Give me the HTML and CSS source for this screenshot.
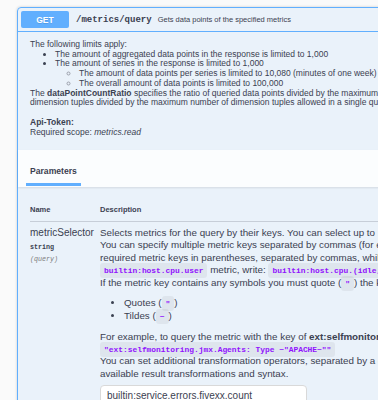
FILE: index.html
```html
<!DOCTYPE html>
<html lang="en">

<head>
    <meta charset="UTF-8">
    <meta name="viewport" content="width=device-width, initial-scale=1.0">
    <title>Metrics API</title>
    <link rel="stylesheet" href="styles.css">
</head>

<body>
    <div class="page">
        <div class="opblock">
            <div class="summary">
                <span class="method">GET</span>
                <span class="path">/metrics/query</span>
                <span class="summary-text">Gets data points of the specified metrics</span>
            </div>

            <div class="op-desc">
                <p>The following limits apply:</p>
                <ul class="limits">
                    <li>The amount of aggregated data points in the response is limited to 1,000</li>
                    <li>The amount of series in the response is limited to 1,000
                        <ul>
                            <li>The amount of data points per series is limited to 10,080 (minutes of one week)</li>
                            <li>The overall amount of data points is limited to 100,000</li>
                        </ul>
                    </li>
                </ul>
                <p>The <b>dataPointCountRatio</b> specifies the ratio of queried data points divided by the maximum number of data points allowed in a single query. The <b>dimensionCountRatio</b> specifies the ratio of queried<br>dimension tuples divided by the maximum number of dimension tuples allowed in a single query.</p>
                <p class="token"><b>Api-Token:</b><br>Required scope: <i>metrics.read</i></p>
            </div>

            <div class="tabs">
                <span class="tab">Parameters</span>
            </div>

            <div class="params">
                <div class="param-head">
                    <span>Name</span>
                    <span>Description</span>
                </div>
                <div class="param-row">
                    <div class="param-name">
                        <div>metricSelector</div>
                        <div class="param-type">string</div>
                        <div class="param-in">(query)</div>
                    </div>
                    <div class="param-desc">
                        <p>Selects metrics for the query by their keys. You can select up to 10 metrics for one query.<br>You can specify multiple metric keys separated by commas (for example, <code>metrickey1,metrickey2</code>). To select multiple metrics belonging to the same parent, list the last part of the<br>required metric keys in parentheses, separated by commas, while keeping the common part untouched. For example, to list the <code>builtin:host.cpu.idle</code> and<br><code>builtin:host.cpu.user</code> metric, write: <code>builtin:host.cpu.(idle,user)</code>.<br>If the metric key contains any symbols you must quote (<code>"</code>) the key. The following characters inside of a quoted metric key must be escaped with a tilde (<code>~</code>):</p>
                        <ul>
                            <li>Quotes (<code>"</code>)</li>
                            <li>Tildes (<code>~</code>)</li>
                        </ul>
                        <p>For example, to query the metric with the key of <b>ext:selfmonitoring.jmx.Agents: Type "APACHE"</b> you must specify this selector:<br><code>"ext:selfmonitoring.jmx.Agents: Type ~"APACHE~""</code><br>You can set additional transformation operators, separated by a colon (<code>:</code>). See Metrics selector transformations in Dynatrace Documentation for additional information on<br>available result transformations and syntax.</p>
                        <input class="selector" type="text" value="builtin:service.errors.fivexx.count">
                    </div>
                </div>
            </div>
        </div>
    </div>
</body>

</html>
```

FILE: styles.css
```css
* {
    box-sizing: border-box;
}

html,
body {
    margin: 0;
    height: 400px;
    overflow: hidden;
}

body {
    background: #fafafa;
    color: #3b4151;
    font-family: "Liberation Sans", Arial, sans-serif;
}

.page {
    padding: 7px 0 0 17px;
}

.opblock {
    width: 640px;
    min-height: 420px;
    border: 1px solid #61affe;
    border-radius: 4px;
    background: rgba(97, 175, 254, .1);
    box-shadow: 0 0 3px rgba(0, 0, 0, .19);
}

/* summary bar */
.summary {
    display: flex;
    align-items: center;
    height: 24px;
    padding: 0 3px;
    border-bottom: 1px solid #61affe;
}

.method {
    display: flex;
    align-items: center;
    justify-content: center;
    width: 48px;
    height: 17px;
    border-radius: 2px;
    background: #61affe;
    color: #fff;
    font-size: 8.5px;
    font-weight: bold;
    text-shadow: 0 1px 0 rgba(0, 0, 0, .1);
}

.path {
    margin-left: 7px;
    font-family: "Liberation Mono", monospace;
    font-size: 9px;
    font-weight: bold;
}

.summary-text {
    margin-left: 6px;
    font-size: 7.5px;
    white-space: nowrap;
}

/* operation description */
.op-desc {
    padding: 8px 12px 13px;
    font-size: 8.5px;
    line-height: 9.7px;
    white-space: nowrap;
}

.op-desc p {
    margin: 0;
}

.limits {
    margin: 0;
    padding-left: 25px;
}

.limits ul {
    margin: 0;
    padding-left: 24px;
    list-style: circle;
}

.limits ul li::marker {
    color: #9aa0ab;
}

.op-desc .token {
    margin-top: 10px;
}

/* tab header */
.tabs {
    padding: 10px 8px 1px;
    background: rgba(255, 255, 255, .8);
    box-shadow: 0 1px 2px rgba(0, 0, 0, .1);
}

.tab {
    display: inline-block;
    padding: 0 4px 7px;
    border-bottom: 3px solid #61affe;
    font-size: 8.6px;
    font-weight: bold;
    line-height: 10px;
}

/* parameters table */
.params {
    padding: 18px 0 0 12px;
}

.param-head {
    display: grid;
    grid-template-columns: 70px 1fr;
    padding-bottom: 7px;
    border-bottom: 1px solid rgba(59, 65, 81, .2);
    font-size: 7.5px;
    font-weight: bold;
    line-height: 9px;
}

.param-row {
    display: grid;
    grid-template-columns: 70px 1fr;
    padding-top: 5px;
}

.param-name {
    font-size: 10px;
    line-height: 11.6px;
}

.param-type,
.param-in {
    font-family: "Liberation Mono", monospace;
    font-size: 6.7px;
    line-height: 8px;
}

.param-type {
    margin-top: 3.6px;
    font-weight: bold;
}

.param-in {
    margin-top: 4px;
    color: #808080;
    font-style: italic;
}

.param-desc {
    font-size: 9.8px;
    line-height: 11.6px;
    white-space: nowrap;
}

.param-desc p {
    margin: 0;
}

.param-desc ul {
    margin: 8px 0;
    padding-left: 24px;
}

.param-desc li {
    line-height: 12px;
}

code {
    padding: 3px 4px;
    border-radius: 3px;
    background: rgba(0, 0, 0, .05);
    color: #9012fe;
    font-family: "Liberation Mono", monospace;
    font-size: 7.9px;
    font-weight: bold;
}

.selector {
    display: block;
    width: 207px;
    height: 21px;
    margin-top: 5px;
    padding: 0 6px;
    border: 1px solid #d9d9d9;
    border-radius: 4px;
    background: #fff;
    color: #3b4151;
    font-family: "Liberation Sans", Arial, sans-serif;
    font-size: 10px;
}
```
